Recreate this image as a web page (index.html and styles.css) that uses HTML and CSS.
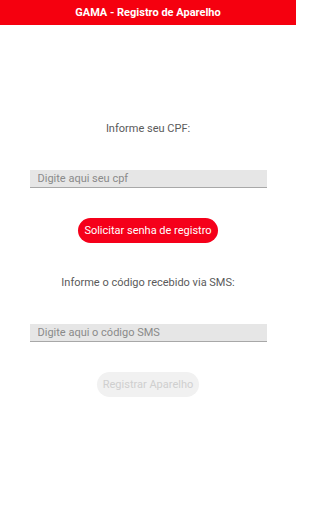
FILE: index.html
```html
<!DOCTYPE html>
<html lang="pt">
<head>
<meta charset="utf-8">
<title>GAMA - Registro de Aparelho</title>
<link rel="stylesheet" href="styles.css">
</head>
<body>
<header class="bar">GAMA - Registro de Aparelho</header>
<main class="content">
  <p class="label label-cpf">Informe seu CPF:</p>
  <input class="field field-cpf" type="text" placeholder="Digite aqui seu cpf">
  <button class="btn btn-primary" type="button">Solicitar senha de registro</button>
  <p class="label label-sms">Informe o código recebido via SMS:</p>
  <input class="field field-sms" type="text" placeholder="Digite aqui o código SMS">
  <button class="btn btn-disabled" type="button" disabled>Registrar Aparelho</button>
</main>
</body>
</html>
```
FILE: styles.css
```css
html, body {
  margin: 0;
  padding: 0;
  background: #ffffff;
  font-family: Roboto, "Liberation Sans", sans-serif;
}
body {
  width: 296px;
  min-height: 512px;
}
.bar {
  height: 25px;
  background: #f5000f;
  color: #ffffff;
  font-weight: bold;
  font-size: 11px;
  display: flex;
  align-items: center;
  justify-content: center;
}
.content {
  display: flex;
  flex-direction: column;
  align-items: center;
}
.label {
  margin: 0;
  font-size: 11px;
  line-height: 14px;
  color: #5a5a5a;
}
.label-cpf { margin-top: 97px; }
.label-sms { margin-top: 33px; }
.field {
  box-sizing: border-box;
  width: 237px;
  height: 18px;
  margin: 34px 0 0 0;
  padding: 0 0 0 8px;
  border: none;
  border-bottom: 1px solid #a8a8a8;
  background: #e6e6e6;
  font-family: Roboto, "Liberation Sans", sans-serif;
  font-size: 11px;
  color: #444;
  outline: none;
}
.field::placeholder { color: #8a8a8a; }
.btn {
  margin-top: 30px;
  height: 25px;
  border: none;
  border-radius: 13px;
  font-family: Roboto, "Liberation Sans", sans-serif;
  font-size: 11px;
  padding: 0 6px;
}
.btn-primary {
  background: #f5001a;
  color: #ffffff;
}
.btn-disabled {
  background: #f1f1f1;
  color: #cfcfcf;
}
```
